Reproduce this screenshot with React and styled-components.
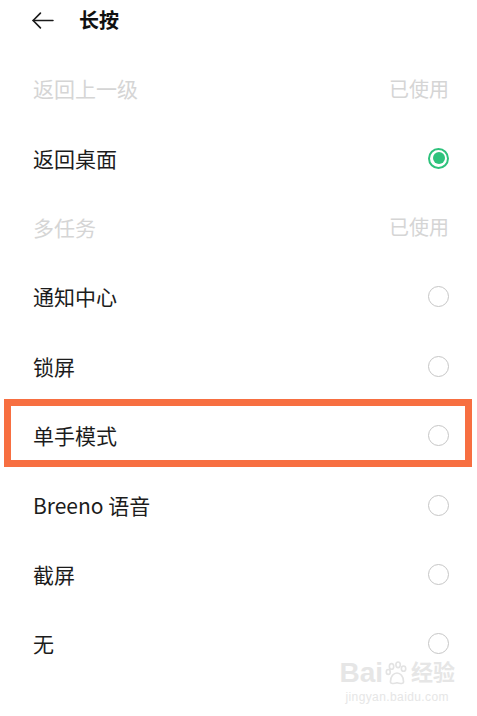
import styled, { createGlobalStyle } from "styled-components";

const GlobalStyle = createGlobalStyle`
  html, body {
    margin: 0;
    padding: 0;
    background: #fff;
  }
  body {
    font-family: "Noto Sans CJK SC", "Noto Sans", sans-serif;
  }
`;

const Page = styled.div`
  position: relative;
  width: 477px;
  height: 716px;
  background: #fff;
  overflow: hidden;
`;

const Header = styled.div`
  display: flex;
  align-items: center;
  height: 40px;
  padding: 0 0 14px 30px;
  gap: 24px;
`;

const BackIcon = styled.svg`
  width: 25px;
  height: 25px;
  color: #1a1a1a;
`;

const Title = styled.h1`
  margin: 0;
  font-size: 20px;
  font-weight: 700;
  color: #111;
  line-height: 1;
`;

const List = styled.div`
  display: flex;
  flex-direction: column;
`;

const Row = styled.div`
  position: relative;
  display: flex;
  align-items: center;
  justify-content: space-between;
  height: 69.4px;
  padding: 0 28px 0 33px;
  box-sizing: border-box;

  ${(p) =>
    p.$highlight &&
    `
    &::after {
      content: "";
      position: absolute;
      left: 4px;
      right: 5px;
      top: -2px;
      bottom: 3px;
      border: 7px solid #f76f41;
    }
  `}
`;

const Label = styled.span`
  font-size: 21px;
  line-height: 1;
  color: ${(p) => (p.$disabled ? "#d5d5d5" : "#1c1c1c")};
`;

const Used = styled.span`
  font-size: 20px;
  line-height: 1;
  color: #d5d5d5;
`;

const Radio = styled.span`
  width: 21px;
  height: 21px;
  border-radius: 50%;
  box-sizing: border-box;
  border: ${(p) => (p.$checked ? "2.5px solid #2ec27c" : "1.8px solid #c6c6c6")};
  display: flex;
  align-items: center;
  justify-content: center;

  &::before {
    content: "";
    width: 12px;
    height: 12px;
    border-radius: 50%;
    background: ${(p) => (p.$checked ? "#2ec27c" : "transparent")};
  }
`;

const Watermark = styled.div`
  position: absolute;
  right: 22px;
  bottom: 12px;
  display: flex;
  flex-direction: column;
  align-items: center;
  color: #e6e6e6;
  font-family: "Liberation Sans", "Noto Sans CJK SC", sans-serif;
  pointer-events: none;
`;

const MarkLine = styled.div`
  display: flex;
  align-items: center;
  gap: 2px;
  font-size: 28px;
  font-weight: 700;
  line-height: 1;
`;

const MarkCn = styled.span`
  font-size: 22px;
`;

const MarkUrl = styled.div`
  font-size: 12px;
  margin-top: 3px;
  letter-spacing: 0.4px;
`;

const items = [
  { label: "返回上一级", used: true },
  { label: "返回桌面", checked: true },
  { label: "多任务", used: true },
  { label: "通知中心" },
  { label: "锁屏" },
  { label: "单手模式", highlight: true },
  { label: "Breeno 语音" },
  { label: "截屏" },
  { label: "无" },
];

export default function App() {
  return (
    <Page>
      <GlobalStyle />
      <Header>
        <BackIcon viewBox="0 0 24 24" fill="none" stroke="currentColor" strokeWidth="1.6" strokeLinecap="round" strokeLinejoin="round">
          <path d="M22 12H3" />
          <path d="M10 5l-7 7 7 7" />
        </BackIcon>
        <Title>长按</Title>
      </Header>
      <List>
        {items.map((it) => (
          <Row key={it.label} $highlight={it.highlight}>
            <Label $disabled={it.used}>{it.label}</Label>
            {it.used ? <Used>已使用</Used> : <Radio $checked={it.checked} />}
          </Row>
        ))}
      </List>
      <Watermark>
        <MarkLine>
          <span>Bai</span>
          <svg width="24" height="24" viewBox="0 0 22 22" fill="none" stroke="#e3e3e3" strokeWidth="1.5">
            <ellipse cx="6" cy="5" rx="2" ry="2.6" />
            <ellipse cx="12" cy="3.5" rx="2" ry="2.6" />
            <ellipse cx="17" cy="7" rx="2" ry="2.4" />
            <ellipse cx="3" cy="10" rx="1.8" ry="2.2" />
            <path d="M5 19c0-5 3-8 6-8s6 3 6 8c0 2-3 2-6 1-3 1-6 1-6-1z" />
          </svg>
          <MarkCn>经验</MarkCn>
        </MarkLine>
        <MarkUrl>jingyan.baidu.com</MarkUrl>
      </Watermark>
    </Page>
  );
}
